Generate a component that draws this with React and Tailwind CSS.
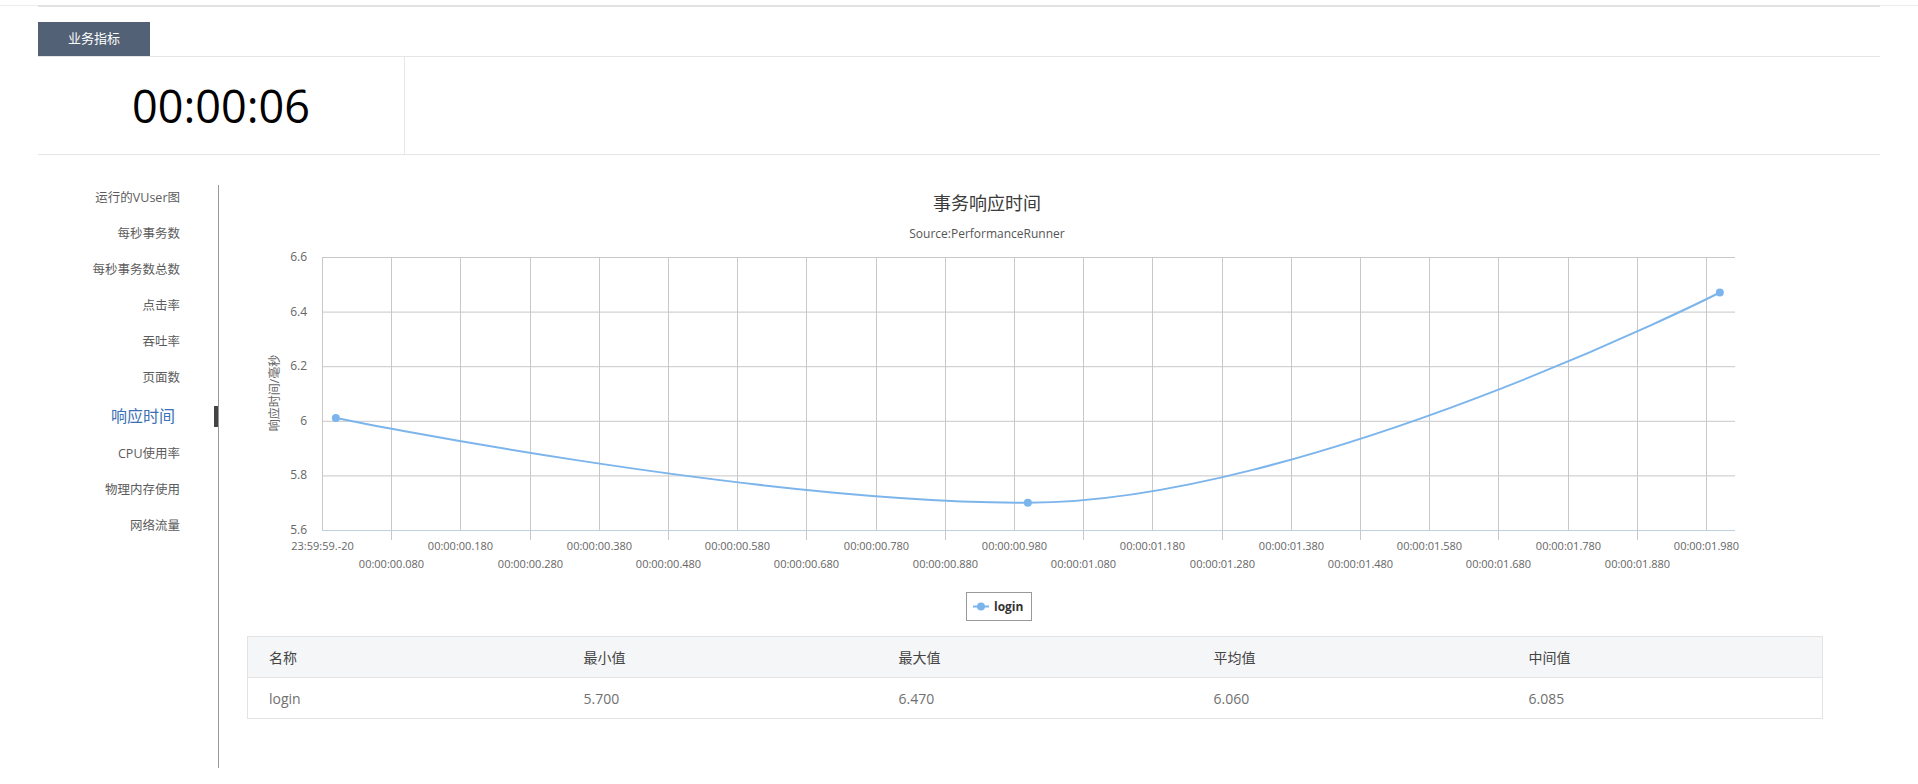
const FONT = "font-['Open_Sans','Noto_Sans_CJK_SC',sans-serif]";

const navItems = [
  '运行的VUser图',
  '每秒事务数',
  '每秒事务数总数',
  '点击率',
  '吞吐率',
  '页面数',
  '响应时间',
  'CPU使用率',
  '物理内存使用',
  '网络流量',
];

const ACTIVE = '响应时间';

// plot geometry inside the chart svg
const PL = 103;
const PR = 1516;
const PT = 72;
const PB = 345;
const STEP = 69.2;

const yTicks = [6.6, 6.4, 6.2, 6, 5.8, 5.6];
const yPos = (v) => PB - (v - 5.6) * 273;

const xLabels = ['23:59:59.-20'];
for (let i = 1; i <= 20; i++) {
  const ms = 80 + (i - 1) * 100;
  const s = Math.floor(ms / 1000);
  const rest = String(ms % 1000).padStart(3, '0');
  xLabels.push(`00:00:0${s}.${rest}`);
}

const points = [
  { t: 0, v: 6.01 },
  { t: 1, v: 5.7 },
  { t: 2, v: 6.47 },
].map((p) => ({ x: PL + ((p.t + 0.02) / 0.1) * STEP, y: yPos(p.v) }));

function ResponseChart() {
  const [a, b, c] = points;
  const lx = (1.5 * b.x + a.x) / 2.5;
  const rx = (1.5 * b.x + c.x) / 2.5;
  const d = `M${a.x} ${a.y} C${a.x} ${a.y} ${lx} ${b.y} ${b.x} ${b.y} C${rx} ${b.y} ${c.x} ${c.y} ${c.x} ${c.y}`;

  return (
    <svg width="1536" height="451" className="block">
      <text x="768" y="25" textAnchor="middle" fontSize="18" fill="#3a3a3a">
        事务响应时间
      </text>
      <text x="768" y="53" textAnchor="middle" fontSize="12" fill="#555">
        Source:PerformanceRunner
      </text>

      {yTicks.map((v) => (
        <g key={v}>
          <line x1={PL} x2={PR} y1={yPos(v) + 0.5} y2={yPos(v) + 0.5} stroke={v === 5.6 ? '#c0d0e0' : '#c8c8c8'} />
          <text x="88" y={yPos(v) + 4} textAnchor="end" fontSize="12" fill="#666">
            {v === 6 ? '6' : v.toFixed(1)}
          </text>
        </g>
      ))}

      {xLabels.map((label, k) => {
        const x = Math.round(PL + k * STEP) + 0.5;
        const odd = k % 2 === 1;
        return (
          <g key={label}>
            <line x1={x} x2={x} y1={PT} y2={odd ? PB + 10 : PB} stroke="#c8c8c8" />
            <text x={x} y={odd ? 383 : 365} textAnchor="middle" fontSize="11" fill="#666">
              {label}
            </text>
          </g>
        );
      })}

      <text
        x="57"
        y="208"
        textAnchor="middle"
        fontSize="12"
        fill="#666"
        transform="rotate(-90 57 208)"
        dominantBaseline="middle"
      >
        响应时间/毫秒
      </text>

      <path d={d} fill="none" stroke="#7cb5ec" strokeWidth="2" />
      {points.map((p, i) => (
        <circle key={i} cx={p.x} cy={p.y} r="4" fill="#7cb5ec" />
      ))}

      <rect x="747.5" y="407.5" width="65" height="28" fill="#fff" stroke="#999" />
      <line x1="754" x2="770" y1="421.5" y2="421.5" stroke="#7cb5ec" strokeWidth="2" />
      <circle cx="762" cy="421.5" r="4" fill="#7cb5ec" />
      <text x="775" y="426" fontSize="12" fontWeight="bold" fill="#333">
        login
      </text>
    </svg>
  );
}

const columns = ['名称', '最小值', '最大值', '平均值', '中间值'];
const rows = [['login', '5.700', '6.470', '6.060', '6.085']];

function StatsTable() {
  return (
    <table className="ml-[28px] w-[1576px] table-fixed border-collapse border border-[#e3e3e3] text-[14px]">
      <thead>
        <tr className="h-[41px] bg-[#f5f6f8] border-b border-[#e3e3e3]">
          {columns.map((col) => (
            <th key={col} className="pl-[21px] text-left font-normal text-[#444]">
              {col}
            </th>
          ))}
        </tr>
      </thead>
      <tbody>
        {rows.map((row) => (
          <tr key={row[0]} className="h-[41px] bg-white">
            {row.map((cell, i) => (
              <td key={i} className="pl-[21px] text-left text-[#707070]">
                {cell}
              </td>
            ))}
          </tr>
        ))}
      </tbody>
    </table>
  );
}

function SideNav() {
  return (
    <ul className="w-[180px] shrink-0 mt-[25px]">
      {navItems.map((item) => {
        const active = item === ACTIVE;
        return (
          <li
            key={item}
            className={`flex items-center justify-end ${active ? 'h-[40px]' : 'h-[36px]'}`}
          >
            <span
              className={
                active
                  ? 'mr-[39px] text-[16px] text-[#3a70b5]'
                  : 'mr-[34px] text-[12.5px] text-[#5c5c5c]'
              }
            >
              {item}
            </span>
            <span className={`w-[4px] h-[21px] ${active ? 'bg-[#444]' : 'bg-transparent'}`} />
          </li>
        );
      })}
    </ul>
  );
}

export default function App() {
  return (
    <div className={`${FONT} w-[1918px] h-[784px] bg-white overflow-hidden`}>
      <div className="pt-[5px]">
        <div className="border-t border-[#ececec]">
          <div className="mx-[38px] -mt-px h-[2px] bg-[#e2e2e2]" />
        </div>
      </div>

      <div className="px-[38px]">
        <div className="mt-[15px] w-[112px] h-[34px] bg-[#526175] text-white text-[13px] flex items-center justify-center">
          业务指标
        </div>

        <div className="flex h-[99px] border-y border-[#e5e5e5]">
          <div className="w-[367px] border-r border-[#e8e8e8] flex items-center justify-center">
            <span className="text-[45px] text-black leading-none">00:00:06</span>
          </div>
          <div className="flex-1" />
        </div>

        <div className="flex">
          <SideNav />
          <div className="mt-[30px] h-[583px] flex-1 border-l border-[#999]">
            <ResponseChart />
            <StatsTable />
          </div>
        </div>
      </div>
    </div>
  );
}
